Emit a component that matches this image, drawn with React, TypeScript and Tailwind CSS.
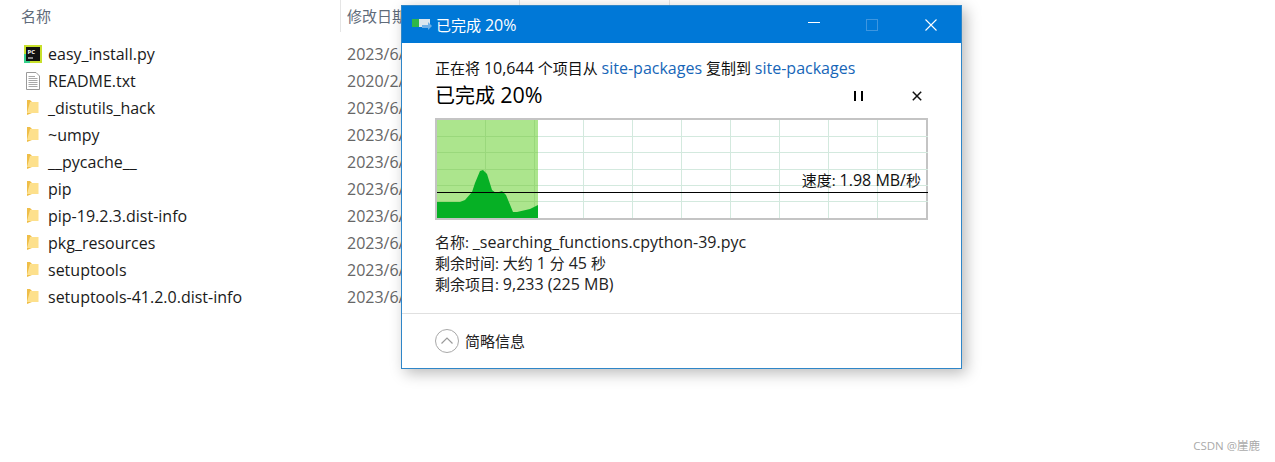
const FONT = '"Open Sans", "Noto Sans CJK SC", sans-serif';

const files = [
  { name: 'easy_install.py', date: '2023/6/', icon: 'py' },
  { name: 'README.txt', date: '2020/2/', icon: 'txt' },
  { name: '_distutils_hack', date: '2023/6/', icon: 'folder' },
  { name: '~umpy', date: '2023/6/', icon: 'folder' },
  { name: '__pycache__', date: '2023/6/', icon: 'folder' },
  { name: 'pip', date: '2023/6/', icon: 'folder' },
  { name: 'pip-19.2.3.dist-info', date: '2023/6/', icon: 'folder' },
  { name: 'pkg_resources', date: '2023/6/', icon: 'folder' },
  { name: 'setuptools', date: '2023/6/', icon: 'folder' },
  { name: 'setuptools-41.2.0.dist-info', date: '2023/6/', icon: 'folder' },
];

// latin runs sit a bit larger than the CJK around them
function L({ children }: { children: React.ReactNode }) {
  return <span className="text-[16px]">{children}</span>;
}

function FileIcon({ type }: { type: string }) {
  if (type === 'py') {
    return (
      <svg width="18" height="18" viewBox="0 0 18 18">
        <rect width="18" height="18" fill="#c8e02c" />
        <rect x="0" y="9" width="6" height="9" fill="#35d08a" />
        <rect x="2" y="2" width="14" height="14" fill="#111" />
        <text x="3.5" y="8.5" fontSize="6" fontWeight="700" fill="#fff" fontFamily="Open Sans">PC</text>
        <rect x="4" y="12.5" width="5" height="1" fill="#fff" />
      </svg>
    );
  }
  if (type === 'txt') {
    return (
      <svg width="16" height="18" viewBox="0 0 16 18">
        <path d="M1.5 .5H11L14.5 4V17.5H1.5Z" fill="#fff" stroke="#9a9a9a" />
        <path d="M3.5 4.5H10M3.5 6.5H12.5M3.5 8.5H12.5M3.5 10.5H12.5M3.5 12.5H12.5M3.5 14.5H12.5" stroke="#a8a8a8" />
      </svg>
    );
  }
  return (
    <svg width="14" height="17" viewBox="0 0 14 17" className="-ml-[1px]">
      <path d="M1 1H4L6 3V14L1 16Z" fill="#efbe48" />
      <path d="M4 3H12.5V14H1Z" fill="#fde08c" />
    </svg>
  );
}

function Chart() {
  const vertical = [48, 97, 146, 195, 244, 293, 342, 391, 440];
  const horizontal = [16, 32, 49, 65, 81];
  return (
    <svg width="491" height="98" viewBox="0 0 491 98" className="block">
      <rect x="0" y="0" width="101" height="98" fill="#ace58d" />
      {vertical.map((x) => (
        <line key={x} x1={x + 0.5} y1="0" x2={x + 0.5} y2="98" stroke={x < 101 ? '#9ad87c' : '#d3e9de'} />
      ))}
      {horizontal.map((y) => (
        <g key={y}>
          <line x1="0" y1={y + 0.5} x2="101" y2={y + 0.5} stroke="#9ad87c" />
          <line x1="101" y1={y + 0.5} x2="491" y2={y + 0.5} stroke="#d3e9de" />
        </g>
      ))}
      <path
        d="M0 82L23 82L28 80L35 72L38 63L43 51L46 50L50 54L55 70L59 73L65 71L69 75L76 92L80 92L93 89L101 85V98H0Z"
        fill="#06b025"
      />
      <line x1="0" y1="72.5" x2="491" y2="72.5" stroke="#000" />
    </svg>
  );
}

export default function App() {
  return (
    <div className="relative h-[462px] w-full overflow-hidden bg-white" style={{ fontFamily: FONT }}>
      {/* Explorer behind the dialog */}
      <div className="flex h-8 text-[15px] text-[#5f6b7a]">
        <div className="flex w-[341px] items-center border-r border-[#e5e5e5] pl-[21px]">名称</div>
        <div className="flex w-[179px] items-center border-r border-[#e5e5e5] pl-[6px]">修改日期</div>
        <div className="w-[150px] border-r border-[#e5e5e5]" />
      </div>
      <div className="mt-[8px] flex flex-col">
        {files.map((f) => (
          <div key={f.name} className="flex h-[27px] items-center text-[16px]">
            <div className="flex w-[48px] justify-center pl-[18px]">
              <FileIcon type={f.icon} />
            </div>
            <div className="w-[299px] text-[#1a1a1a]">{f.name}</div>
            <div className="text-[#666]">{f.date}</div>
          </div>
        ))}
      </div>

      {/* Copy progress dialog */}
      <div className="absolute left-[401px] top-[5px] flex h-[364px] w-[561px] flex-col border border-[#2f86c8] bg-white shadow-[4px_4px_14px_rgba(0,0,0,0.28)]">
        <div className="flex h-[37px] shrink-0 items-center bg-[#0078d7] text-white">
          <svg width="20" height="14" viewBox="0 0 20 14" className="ml-[10px]">
            <rect x="0" y="1" width="18" height="8" fill="#dbe6ee" />
            <rect x="0" y="1" width="7" height="8" fill="#2fb84a" />
            <path d="M10 7H16V4L20 8L16 12V10H10Z" fill="#6fb0e6" />
          </svg>
          <span className="ml-[4px] text-[15px]">
            已完成 <L>20%</L>
          </span>
          <div className="ml-auto flex items-center">
            <div className="mb-[4px] h-px w-3 bg-white" />
            <div className="ml-[46px] size-3 border border-[#3d96e0]" />
            <svg width="12" height="12" viewBox="0 0 12 12" className="ml-[47px] mr-[24px]">
              <path d="M.5 .5L11.5 11.5M11.5 .5L.5 11.5" stroke="#fff" strokeWidth="1.1" />
            </svg>
          </div>
        </div>

        <div className="flex flex-1 flex-col px-[33px]">
          <div className="mt-[15px] h-[21px] text-[15px] leading-[21px] text-[#111]">
            正在将 <L>10,644</L> 个项目从 <L><span className="text-[#1766b8]">site-packages</span></L> 复制到{' '}
            <L><span className="text-[#1766b8]">site-packages</span></L>
          </div>
          <div className="mt-[1px] flex h-[31px] items-center text-[20px] text-black">
            <span>
              已完成 <span className="text-[21.5px]">20%</span>
            </span>
            <div className="ml-auto flex items-center">
              <div className="mr-[-2px] flex gap-[5px]">
                <div className="h-[10px] w-[2px] bg-black" />
                <div className="h-[10px] w-[2px] bg-black" />
              </div>
              <svg width="10" height="10" viewBox="0 0 10 10" className="ml-[51px] mr-[6px]">
                <path d="M.8 .8L9.2 9.2M9.2 .8L.8 9.2" stroke="#111" strokeWidth="1.5" />
              </svg>
            </div>
          </div>

          <div className="relative mt-[7px] w-[493px] border-2 border-[#c4c4c4]">
            <Chart />
            <div className="absolute right-[5px] top-[50px] text-[15px] leading-[20px] text-[#111]">
              速度: <L>1.98 MB/</L>秒
            </div>
          </div>

          <div className="mt-[12px] text-[15px] leading-[21px] text-[#222]">
            <div>
              名称: <L>_searching_functions.cpython-39.pyc</L>
            </div>
            <div>
              剩余时间: 大约 <L>1</L> 分 <L>45</L> 秒
            </div>
            <div>
              剩余项目: <L>9,233 (225 MB)</L>
            </div>
          </div>
        </div>

        <div className="flex h-[55px] shrink-0 items-center border-t border-[#e0e0e0] pl-[33px]">
          <svg width="24" height="24" viewBox="0 0 24 24">
            <circle cx="12" cy="12" r="11.5" fill="#fff" stroke="#a8a8a8" />
            <path d="M6.5 14.5L12 9L17.5 14.5" fill="none" stroke="#9a9a9a" strokeWidth="1.2" />
          </svg>
          <span className="ml-[6px] text-[15px] text-[#222]">简略信息</span>
        </div>
      </div>

      <div className="absolute bottom-[8px] right-[15px] text-[11.5px] text-[#aaa]">CSDN @崖鹿</div>
    </div>
  );
}
